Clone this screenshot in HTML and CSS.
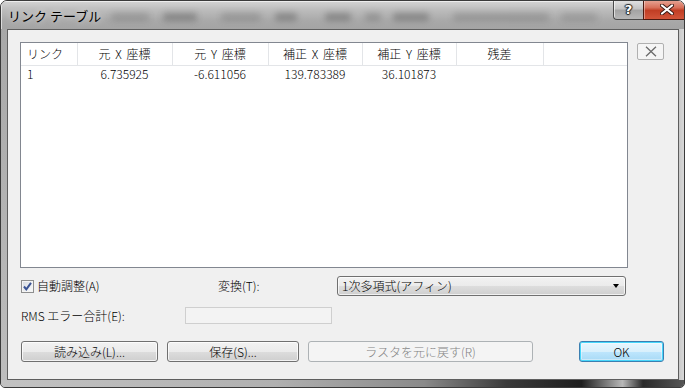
FILE: index.html
```html
<!DOCTYPE html>
<html lang="ja">
<head>
<meta charset="utf-8">
<title>リンク テーブル</title>
<link rel="stylesheet" href="styles.css">
</head>
<body>
<div class="window">
  <div class="titlebar">
    <span class="title">リンク テーブル</span>
    <div class="glass-blur" aria-hidden="true">
      <i></i><i></i><i></i><i></i><i></i><i></i><i></i><i></i><i></i>
    </div>
    <div class="caption">
      <div class="cap-help">?</div>
      <div class="cap-close">
        <svg width="14" height="11" viewBox="0 0 14 11"><path d="M2 1.5 L12 9.5 M12 1.5 L2 9.5" stroke="#3a1a14" stroke-width="4" stroke-linecap="round"/><path d="M2 1.5 L12 9.5 M12 1.5 L2 9.5" stroke="#ffffff" stroke-width="2.2" stroke-linecap="round"/></svg>
      </div>
    </div>
  </div>
  <div class="middle">
    <div class="frame-l"></div>
    <div class="client">
      <div class="top-row">
        <div class="listview">
          <table class="grid">
            <colgroup>
              <col class="c1"><col class="c2"><col class="c3"><col class="c4"><col class="c5"><col class="c6"><col>
            </colgroup>
            <thead>
              <tr>
                <th class="left">リンク</th>
                <th>元 X 座標</th>
                <th>元 Y 座標</th>
                <th>補正 X 座標</th>
                <th>補正 Y 座標</th>
                <th>残差</th>
                <th class="last"></th>
              </tr>
            </thead>
            <tbody>
              <tr>
                <td class="left">1</td>
                <td>6.735925</td>
                <td>-6.611056</td>
                <td>139.783389</td>
                <td>36.101873</td>
                <td></td>
                <td></td>
              </tr>
            </tbody>
          </table>
        </div>
        <div class="del-btn">
          <svg width="12" height="11" viewBox="0 0 12 11"><path d="M1 0.8 L11 10.2 M11 0.8 L1 10.2" stroke="#6a6a6a" stroke-width="1.3"/></svg>
        </div>
      </div>
      <div class="row2">
        <label class="check">
          <span class="box">
            <svg width="11" height="11" viewBox="0 0 11 11"><path d="M2 5.5 L4.3 8.3 L9 1.8" fill="none" stroke="#3b5494" stroke-width="2"/></svg>
          </span>
          <span>自動調整(A)</span>
        </label>
        <span class="lbl">変換(T):</span>
        <div class="combo">
          <span>1次多項式(アフィン)</span>
          <span class="arrow"></span>
        </div>
      </div>
      <div class="row3">
        <span class="lbl">RMS エラー合計(E):</span>
        <div class="textbox"></div>
      </div>
      <div class="buttons">
        <div class="btn w-load">読み込み(L)...</div>
        <div class="btn w-save">保存(S)...</div>
        <div class="btn disabled w-restore">ラスタを元に戻す(R)</div>
        <div class="btn default w-ok">OK</div>
      </div>
    </div>
    <div class="frame-r"></div>
  </div>
  <div class="frame-b"></div>
</div>
</body>
</html>
```

FILE: styles.css
```css
* { box-sizing: border-box; }
html, body {
  margin: 0;
  padding: 0;
  background: #ffffff;
}
body {
  font-family: "Noto Sans CJK JP", "Noto Sans", sans-serif;
  font-size: 12px;
  font-weight: 300;
  color: #000;
}
.window {
  width: 685px;
  height: 388px;
  border: 1px solid #3a3a3a;
  border-radius: 7px 7px 5px 5px;
  overflow: hidden;
  display: flex;
  flex-direction: column;
  background: #b9b9b9;
}
.titlebar {
  height: 28px;
  flex: none;
  display: flex;
  align-items: flex-start;
  background: linear-gradient(to bottom, #d4d4d4 0%, #bdbdbd 30%, #a9a9a9 70%, #a4a4a4 100%);
  box-shadow: inset 1px 1px 0 rgba(255,255,255,0.6);
}
.title {
  margin: 6px 0 0 7px;
  font-size: 13px;
  font-weight: 400;
  line-height: 18px;
  color: #000;
  white-space: nowrap;
  text-shadow: 0 0 6px rgba(255,255,255,0.8);
}
.glass-blur {
  flex: 1;
  display: flex;
  align-items: center;
  height: 14px;
  margin: 9px 16px 0 10px;
  filter: blur(3px);
  opacity: 0.45;
}
.glass-blur i {
  display: block;
  height: 8px;
  background: #555;
  border-radius: 3px;
}
.glass-blur i:nth-child(1) { width: 38px; margin-left: 0; opacity: 0.6; }
.glass-blur i:nth-child(2) { width: 34px; margin-left: 14px; }
.glass-blur i:nth-child(3) { width: 40px; margin-left: 24px; opacity: 0.6; }
.glass-blur i:nth-child(4) { width: 22px; margin-left: 14px; }
.glass-blur i:nth-child(5) { width: 26px; margin-left: 28px; }
.glass-blur i:nth-child(6) { width: 16px; margin-left: 14px; opacity: 0.7; }
.glass-blur i:nth-child(7) { width: 36px; margin-left: 12px; }
.glass-blur i:nth-child(8) { width: 96px; margin-left: 24px; opacity: 0.6; }
.glass-blur i:nth-child(9) { width: 36px; margin-left: 12px; opacity: 0.5; }
.caption {
  display: flex;
  margin-right: 6px;
  margin-top: -1px;
  flex: none;
}
.cap-help, .cap-close {
  height: 20px;
  display: flex;
  align-items: center;
  justify-content: center;
  border: 1px solid #4a4a4a;
  border-top: none;
}
.cap-help {
  width: 30px;
  border-radius: 0 0 0 4px;
  border-right: none;
  background: linear-gradient(to bottom, #e4e4e4 0%, #c4c4c4 45%, #a4a4a4 55%, #b8b8b8 100%);
  font-family: "DejaVu Sans", sans-serif;
  font-weight: bold;
  font-size: 13px;
  color: #fff;
  text-shadow: 0 0 1px #222, 1px 0 1px #222, -1px 0 1px #222, 0 1px 1px #222, 0 -1px 1px #222;
  box-shadow: inset 1px 1px 0 rgba(255,255,255,0.6);
}
.cap-close {
  width: 47px;
  border-color: #4d1a10;
  border-radius: 0 0 4px 0;
  background: linear-gradient(to bottom, #e8a898 0%, #d8705a 40%, #c13e24 55%, #d2553a 100%);
  box-shadow: inset 1px 1px 0 rgba(255,255,255,0.4);
}
.middle {
  flex: 1;
  display: flex;
  min-height: 0;
}
.frame-l, .frame-r {
  width: 6px;
  flex: none;
}
.frame-l { background: linear-gradient(to bottom, #a8a8a8, #bdbdbd); }
.frame-r { background: linear-gradient(to right, #c9c9c9, #dadada); }
.frame-b {
  height: 7px;
  flex: none;
  background: linear-gradient(to right, #c2c2c2 0%, #b0b0b0 40%, #8a8a8a 62%, #3a3a3a 74%, #1e1e1e 85%, #b8b8b8 91%, #2a2a2a 94%, #555 100%);
}
.client {
  flex: 1;
  background: #f0f0f0;
  border: 1px solid #5e5e5e;
  padding: 12px 14px 0 12px;
  display: flex;
  flex-direction: column;
}
.top-row {
  display: flex;
  align-items: flex-start;
  gap: 9px;
}
.listview {
  width: 608px;
  height: 226px;
  border: 1px solid #828790;
  background: #fff;
  flex: none;
}
.grid {
  border-collapse: collapse;
  table-layout: fixed;
  width: 606px;
}
.grid col.c1 { width: 56px; }
.grid col.c2 { width: 95px; }
.grid col.c3 { width: 96px; }
.grid col.c4 { width: 94px; }
.grid col.c5 { width: 94px; }
.grid col.c6 { width: 87px; }
.grid th {
  height: 22px;
  padding: 0;
  font-weight: 300;
  text-align: center;
  line-height: 16px;
  word-spacing: 2px;
  border-right: 1px solid #e3e5e8;
  border-bottom: 1px solid #e3e5e8;
  white-space: nowrap;
  background: #fff;
}
.grid th.last { border-right: none; }
.grid td {
  height: 16px;
  padding: 0;
  line-height: 16px;
  text-align: center;
  white-space: nowrap;
}
.grid .left { text-align: left; padding-left: 6px; }
.del-btn {
  width: 27px;
  height: 17px;
  margin-top: 1px;
  border: 1px solid #b0b0b0;
  border-radius: 2px;
  background: #f5f5f5;
  display: flex;
  align-items: center;
  justify-content: center;
  flex: none;
}
.row2 {
  margin-top: 8px;
  padding-left: 1px;
  height: 20px;
  display: grid;
  grid-template-columns: 197px 119px 289px;
  align-items: center;
}
.check {
  display: flex;
  align-items: center;
  gap: 3px;
  line-height: 16px;
}
.box {
  width: 13px;
  height: 13px;
  border: 1px solid #8e8f8f;
  background: linear-gradient(135deg, #d6dae0, #fbfbfb);
  display: flex;
  align-items: center;
  justify-content: center;
  box-shadow: inset 0 0 0 1px #f4f4f4;
}
.lbl { line-height: 16px; white-space: nowrap; }
.combo {
  height: 20px;
  border: 1px solid #707070;
  border-radius: 3px;
  background: linear-gradient(to bottom, #f2f2f2 0%, #ebebeb 50%, #dddddd 51%, #cfcfcf 100%);
  box-shadow: inset 0 0 0 1px rgba(255,255,255,0.7);
  display: flex;
  align-items: center;
  justify-content: space-between;
  padding: 0 6px 0 4px;
  line-height: 16px;
}
.arrow {
  width: 0;
  height: 0;
  border-left: 3.5px solid transparent;
  border-right: 3.5px solid transparent;
  border-top: 4px solid #000;
}
.row3 {
  margin-top: 11px;
  padding-left: 1px;
  height: 17px;
  display: grid;
  grid-template-columns: 164px 147px;
  align-items: center;
}
.textbox {
  height: 17px;
  border: 1px solid #cfcfcf;
  background: #f3f3f3;
}
.buttons {
  margin-top: 17px;
  padding-left: 1px;
  display: flex;
  gap: 9px;
}
.btn {
  height: 21px;
  border: 1px solid #707070;
  border-radius: 3px;
  background: linear-gradient(to bottom, #f2f2f2 0%, #ebebeb 50%, #dddddd 51%, #cfcfcf 100%);
  box-shadow: inset 0 0 0 1px rgba(255,255,255,0.75);
  display: flex;
  align-items: center;
  justify-content: center;
  line-height: 16px;
  white-space: nowrap;
  flex: none;
}
.btn.disabled {
  border-color: #adb2b5;
  background: #f4f4f4;
  color: #838383;
  box-shadow: none;
}
.btn.default {
  border-color: #3c7fb1;
  background: linear-gradient(to bottom, #eaf6fd 0%, #d9f0fc 50%, #bee6fd 51%, #a7d9f5 100%);
  box-shadow: inset 0 0 0 1px #48d7fb, inset 0 0 0 2px rgba(255,255,255,0.4);
  margin-left: auto;
}
.w-load { width: 137px; }
.w-save { width: 132px; }
.w-restore { width: 225px; }
.w-ok { width: 85px; }
```
